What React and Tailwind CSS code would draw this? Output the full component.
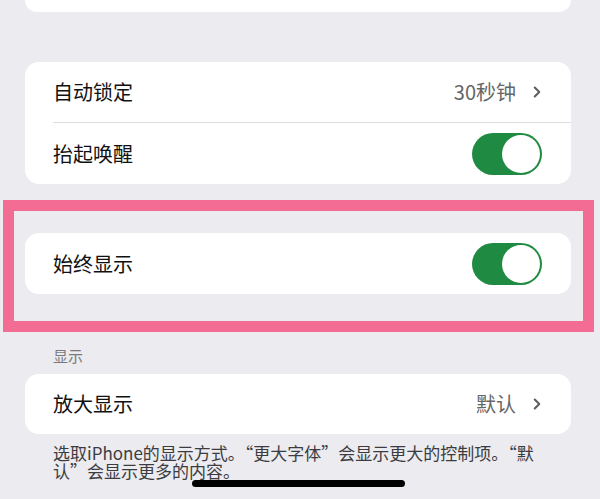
import { ChevronRight } from 'lucide-react';

const font = { fontFamily: '"Noto Sans CJK SC", "Noto Sans", sans-serif' };

function Toggle() {
  return (
    <div className="relative w-[70px] h-[42px] rounded-full bg-[#1f8a42]">
      <div className="absolute right-[2px] top-[2px] w-[38px] h-[38px] rounded-full bg-white" />
    </div>
  );
}

function Row({ label, value, toggle, height = 'h-[61px]' }) {
  return (
    <div className={`flex items-center justify-between pl-[28px] pr-[29px] ${height}`}>
      <span className="text-[20px] text-[#111]">{label}</span>
      {toggle ? (
        <Toggle />
      ) : (
        <span className="flex items-center gap-[12px] mr-[-4px] text-[20px] text-[#666]">
          {value}
          <ChevronRight className="w-[18px] h-[18px] text-[#5f5f63]" strokeWidth={2.8} />
        </span>
      )}
    </div>
  );
}

export default function App() {
  return (
    <div className="relative w-[600px] h-[499px] overflow-hidden bg-[#ebebf0]" style={font}>
      {/* top card, mostly off screen */}
      <div className="ml-[25px] w-[546px] h-[12px] bg-white rounded-b-[14px]" />

      <div className="ml-[25px] w-[546px] mt-[50px] bg-white rounded-[14px]">
        <Row label="自动锁定" value="30秒钟" height="h-[60px]" />
        <div className="ml-[28px] h-px bg-[#dcdce0]" />
        <Row label="抬起唤醒" toggle height="h-[61px]" />
      </div>

      {/* highlight frame */}
      <div className="ml-[3px] w-[591px] mt-[16px] border-[11px] border-[#f26c94] pt-[22px] pb-[27px] pl-[11px] pr-[12px]">
        <div className="bg-white rounded-[14px]">
          <Row label="始终显示" toggle />
        </div>
      </div>

      <div className="ml-[53px] mt-[14px] text-[15px] leading-[20px] text-[#7a7a7e]">显示</div>

      <div className="ml-[25px] w-[546px] mt-[8px] bg-white rounded-[14px]">
        <Row label="放大显示" value="默认" height="h-[60px]" />
      </div>

      <p className="ml-[53px] w-[500px] mt-[10px] text-[17px] leading-[18px] text-[#3c3c40]">
        选取iPhone的显示方式。“更大字体”会显示更大的控制项。“默认”会显示更多的内容。
      </p>

      {/* home indicator */}
      <div className="absolute left-[192px] top-[480px] w-[213px] h-[7px] rounded-full bg-black" />
    </div>
  );
}
